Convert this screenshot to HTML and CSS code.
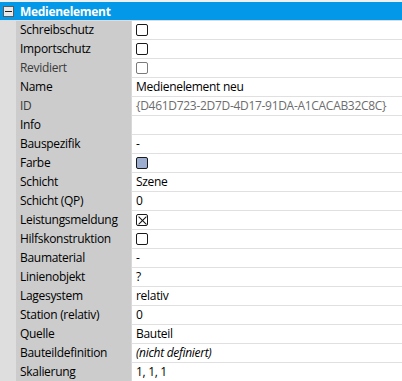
FILE: index.html
```html
<!DOCTYPE html>
<html lang="de">
  <head>
    <title>Eigenschaften</title>
    <link rel="stylesheet" href="styles.css">
  </head>
  <body>
    <div class="grid">
      <div class="category">
        <span class="toggle"></span>
        <span class="category-title">Medienelement</span>
      </div>
      <div class="rows">
        <div class="row"><div class="name">Schreibschutz</div><div class="value"><span class="check"></span></div></div>
        <div class="row"><div class="name">Importschutz</div><div class="value"><span class="check"></span></div></div>
        <div class="row disabled"><div class="name">Revidiert</div><div class="value"><span class="check"></span></div></div>
        <div class="row"><div class="name">Name</div><div class="value">Medienelement neu</div></div>
        <div class="row disabled"><div class="name">ID</div><div class="value">{D461D723-2D7D-4D17-91DA-A1CACAB32C8C}</div></div>
        <div class="row"><div class="name">Info</div><div class="value"></div></div>
        <div class="row"><div class="name">Bauspezifik</div><div class="value">-</div></div>
        <div class="row"><div class="name">Farbe</div><div class="value"><span class="check swatch"></span></div></div>
        <div class="row"><div class="name">Schicht</div><div class="value">Szene</div></div>
        <div class="row"><div class="name">Schicht (QP)</div><div class="value">0</div></div>
        <div class="row"><div class="name">Leistungsmeldung</div><div class="value"><span class="check checked"></span></div></div>
        <div class="row"><div class="name">Hilfskonstruktion</div><div class="value"><span class="check"></span></div></div>
        <div class="row"><div class="name">Baumaterial</div><div class="value">-</div></div>
        <div class="row"><div class="name">Linienobjekt</div><div class="value">?</div></div>
        <div class="row"><div class="name">Lagesystem</div><div class="value">relativ</div></div>
        <div class="row"><div class="name">Station (relativ)</div><div class="value">0</div></div>
        <div class="row"><div class="name">Quelle</div><div class="value">Bauteil</div></div>
        <div class="row"><div class="name">Bauteildefinition</div><div class="value"><i>(nicht definiert)</i></div></div>
        <div class="row"><div class="name">Skalierung</div><div class="value">1, 1, 1</div></div>
      </div>
    </div>
  </body>
</html>
```

FILE: styles.css
```css
body {
  margin: 0;
  background-color: #f0f0f0;
  font-family: "Open Sans", "Noto Sans", sans-serif;
  font-size: 12px;
  color: #000;
  overflow: hidden;
}

.grid {
  padding-top: 2px;
}

.category {
  display: flex;
  align-items: center;
  height: 18px;
  background-color: #0399e8;
  border-bottom: 1px solid #dcdcdc;
}

.toggle {
  position: relative;
  box-sizing: border-box;
  width: 11px;
  height: 11px;
  margin-left: 3px;
  margin-right: 6px;
  background-color: #e8e8e8;
  border: 1px solid #5a5a5a;
}

.toggle::after {
  content: "";
  position: absolute;
  left: 1px;
  right: 1px;
  top: 4px;
  height: 1px;
  background-color: #222;
}

.category-title {
  color: #fff;
  font-weight: bold;
  letter-spacing: -0.3px;
}

.rows {
  padding-left: 16px;
  background-color: #dedede;
}

.row {
  display: flex;
  height: 19px;
  line-height: 18px;
}

.name {
  width: 111px;
  padding-left: 4px;
  background-color: #cccccc;
  white-space: nowrap;
  letter-spacing: -0.3px;
}

.value {
  flex: 1;
  display: flex;
  align-items: center;
  padding-left: 4px;
  background-color: #fff;
  border-left: 1px solid #d8d8d8;
  border-bottom: 1px solid #e0e0e0;
  white-space: nowrap;
  letter-spacing: -0.3px;
}

.disabled .name {
  color: #3a3a3a;
}

.disabled .value {
  color: #6d6d6d;
}

.check {
  position: relative;
  box-sizing: border-box;
  width: 12px;
  height: 12px;
  border: 1px solid #1a1a1a;
  border-radius: 2px;
  background-color: #fff;
}

.disabled .check {
  border-color: #7a7a7a;
}

.swatch {
  background-color: #9dadd0;
}

.checked::before,
.checked::after {
  content: "";
  position: absolute;
  left: -0.5px;
  top: 4.5px;
  width: 11px;
  height: 1px;
  background-color: #111;
  transform: rotate(45deg);
}

.checked::after {
  transform: rotate(-45deg);
}
```
